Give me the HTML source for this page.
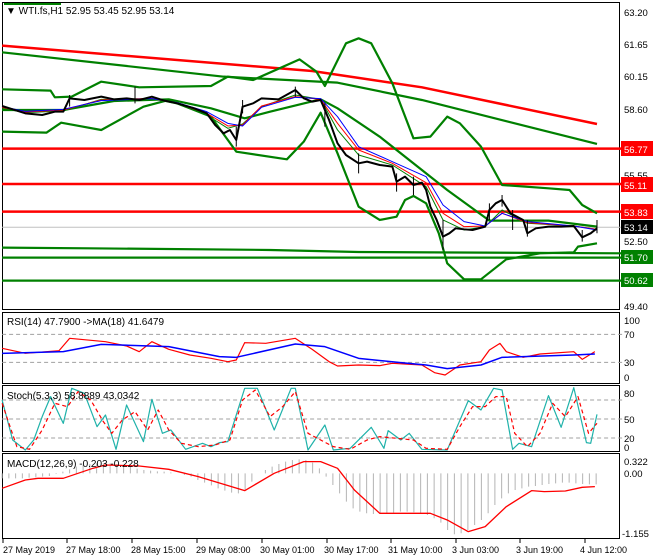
<!DOCTYPE html>
<html><head><meta charset="utf-8"><style>
html,body{margin:0;padding:0;background:#fff;}
svg{display:block;font-family:"Liberation Sans",sans-serif;}
</style></head><body>
<svg width="660" height="560" viewBox="0 0 660 560" xmlns="http://www.w3.org/2000/svg">
<rect width="660" height="560" fill="#fff"/>
<g fill="none" stroke="#000" stroke-width="1">
<rect x="2.5" y="2.5" width="617" height="307"/>
<rect x="2.5" y="312.5" width="617" height="71"/>
<rect x="2.5" y="385.5" width="617" height="66"/>
<rect x="2.5" y="453.5" width="617" height="85"/>
</g>
<line x1="4" y1="4" x2="61" y2="4" stroke="#008000" stroke-width="2"/>
<g transform="scale(0.4219,0.3333)" fill="none" stroke-linejoin="round">
<line x1="5" y1="682" x2="1475" y2="682" stroke="#c0c0c0" stroke-width="1" vector-effect="non-scaling-stroke"/>
<g stroke="#ff0000" stroke-width="2.5" vector-effect="non-scaling-stroke">
<line x1="5" y1="446" x2="1475" y2="446" vector-effect="non-scaling-stroke"/>
<line x1="5" y1="552" x2="1475" y2="552" vector-effect="non-scaling-stroke"/>
<line x1="5" y1="635" x2="1475" y2="635" vector-effect="non-scaling-stroke"/>
<polyline points="5,137 740,213 1000,262 1415,372" vector-effect="non-scaling-stroke"/>
</g>
<g stroke="#008000" stroke-width="2.2">
<line x1="5" y1="773" x2="1475" y2="773" vector-effect="non-scaling-stroke"/>
<line x1="5" y1="842" x2="1475" y2="842" vector-effect="non-scaling-stroke"/>
<polyline points="5,743 210,745 640,750 850,756 1475,760" vector-effect="non-scaling-stroke"/>
<polyline points="5,157 530,230 800,248 1000,300 1415,432" vector-effect="non-scaling-stroke"/>
<polyline points="5,268 120,272 130,292 170,290 240,245 330,262 500,258 540,230 600,240 710,178 750,215 770,258 820,130 850,115 880,130 930,250 980,415 1020,410 1060,350 1090,370 1140,440 1190,555 1300,565 1350,570 1380,615 1415,640" vector-effect="non-scaling-stroke"/>
<polyline points="5,330 150,330 270,303 400,298 500,325 580,355 640,335 760,298 800,325 900,410 1000,510 1060,570 1160,662 1300,662 1415,680" vector-effect="non-scaling-stroke"/>
<polyline points="5,395 110,398 145,368 240,390 340,320 400,300 500,350 560,455 680,478 720,425 760,338 800,460 850,620 900,660 940,650 960,600 980,588 1010,610 1040,700 1060,790 1100,838 1140,838 1200,778 1280,760 1360,757 1370,740 1415,730" vector-effect="non-scaling-stroke"/>
</g>
<polyline stroke="#008000" stroke-width="1" points="5,325 60,338 150,333 240,298 360,296 420,312 490,345 540,385 575,372 620,320 700,285 760,298 800,390 850,465 930,495 1010,560 1050,660 1100,690 1150,680 1190,630 1250,670 1360,678 1415,688" vector-effect="non-scaling-stroke"/>
<polyline stroke="#ff0000" stroke-width="1" points="5,322 60,336 150,330 240,300 360,295 420,310 490,340 540,378 575,375 620,318 700,290 760,298 800,370 850,450 930,490 1010,548 1050,640 1100,680 1150,678 1190,640 1250,668 1360,678 1415,688" vector-effect="non-scaling-stroke"/>
<polyline stroke="#0000ff" stroke-width="1" points="5,320 60,334 150,328 240,302 360,296 420,308 490,335 540,370 575,378 620,322 700,292 760,296 800,350 850,440 930,485 1010,530 1050,615 1100,665 1150,678 1190,640 1250,665 1360,678 1415,690" vector-effect="non-scaling-stroke"/>
<polyline stroke="#000" stroke-width="2" points="5,318 30,328 60,340 100,345 130,335 150,335 165,295 200,300 240,290 270,298 300,295 330,300 360,290 390,302 420,310 460,325 490,340 510,375 530,400 545,390 560,420 575,320 600,310 620,295 660,298 700,270 720,295 740,305 760,300 780,360 800,430 820,465 850,490 870,485 900,495 930,500 940,545 960,530 980,555 1000,548 1010,570 1020,620 1035,660 1050,710 1065,700 1080,685 1100,688 1120,690 1150,680 1160,630 1175,610 1190,600 1210,640 1225,650 1240,660 1250,700 1270,685 1300,680 1330,680 1360,678 1380,712 1400,700 1415,685" vector-effect="non-scaling-stroke"/>
<path stroke="#000" stroke-width="1" d="M165 285V320M320 260V310M560 380V440M575 300V340M700 260V290M770 310V380M850 460V520M940 520V575M980 530V585M1050 660V750M1160 610V660M1190 585V620M1215 630V690M1250 660V710M1380 690V725M1415 660V700" vector-effect="non-scaling-stroke"/>
</g>
<g transform="translate(0,300) scale(0.4219,0.3333)" fill="none" stroke-linejoin="round">
<g stroke="#a0a0a0" stroke-width="1" stroke-dasharray="4,3">
<line x1="5" y1="103" x2="1475" y2="103" vector-effect="non-scaling-stroke"/>
<line x1="5" y1="187" x2="1475" y2="187" vector-effect="non-scaling-stroke"/>
<line x1="5" y1="300" x2="1475" y2="300" vector-effect="non-scaling-stroke"/>
<line x1="5" y1="357" x2="1475" y2="357" vector-effect="non-scaling-stroke"/>
<line x1="5" y1="414" x2="1475" y2="414" vector-effect="non-scaling-stroke"/>
</g>
<polyline stroke="#ff0000" stroke-width="1.2" points="5,145 60,160 140,152 165,115 250,125 300,138 330,155 360,125 400,148 450,165 500,175 540,185 560,180 580,128 630,130 700,115 740,148 780,185 800,198 850,195 900,197 930,190 1000,195 1030,218 1055,225 1090,195 1140,185 1160,150 1185,130 1200,155 1240,172 1280,162 1360,155 1380,178 1410,155" vector-effect="non-scaling-stroke"/>
<polyline stroke="#0000ff" stroke-width="1.5" points="5,160 150,155 240,133 400,140 520,170 560,172 700,132 770,140 850,175 950,188 1010,195 1060,206 1140,195 1190,172 1360,165 1410,162" vector-effect="non-scaling-stroke"/>
<polyline stroke="#20b2aa" stroke-width="1.2" points="5,300 30,420 60,450 80,420 100,350 120,290 150,370 170,265 200,280 230,380 250,345 275,448 300,315 340,425 360,298 385,400 405,390 440,448 480,430 500,440 520,428 540,425 580,265 610,265 650,390 690,265 700,265 730,450 770,375 790,450 830,445 880,382 910,445 920,392 950,420 970,400 1000,448 1060,450 1110,302 1140,330 1170,265 1190,270 1215,448 1230,430 1260,440 1300,287 1330,382 1360,263 1390,428 1400,430 1415,343" vector-effect="non-scaling-stroke"/>
<polyline stroke="#ff0000" stroke-width="1.2" stroke-dasharray="4,3" points="5,310 40,440 70,448 100,390 130,310 160,320 185,275 215,300 245,365 265,400 290,360 320,335 350,390 375,330 400,390 430,430 470,440 510,435 545,420 575,300 605,270 640,350 670,320 700,275 730,400 760,420 790,440 830,448 870,420 900,410 940,415 980,420 1010,445 1060,448 1090,380 1120,320 1150,320 1175,290 1200,290 1220,400 1250,440 1280,400 1310,310 1340,350 1370,290 1395,400 1415,370" vector-effect="non-scaling-stroke"/>
<path stroke="#b4b4b4" stroke-width="1" vector-effect="non-scaling-stroke" d="M5 520V535M21 520V535M37 520V535M53 520V535M69 520V533M85 520V532M101 520V530M117 520V528M133 520V522M149 520V515M165 520V508M181 520V500M197 520V495M213 520V492M229 520V490M245 520V490M261 520V490M277 520V492M293 520V495M309 520V500M325 520V506M341 520V510M357 520V512M373 520V514M389 520V515M405 520V517M421 520V520M437 520V525M453 520V530M469 520V540M485 520V548M501 520V556M517 520V565M533 520V572M549 520V578M565 520V580M581 520V570M597 520V545M613 520V520M629 520V510M645 520V500M661 520V492M677 520V485M693 520V480M709 520V478M725 520V480M741 520V488M757 520V505M773 520V530M789 520V555M805 520V580M821 520V605M837 520V625M853 520V635M869 520V640M885 520V642M901 520V642M917 520V640M933 520V638M949 520V635M965 520V635M981 520V637M997 520V640M1013 520V645M1029 520V655M1045 520V668M1061 520V690M1077 520V703M1093 520V700M1109 520V690M1125 520V675M1141 520V660M1157 520V640M1173 520V615M1189 520V595M1205 520V580M1221 520V570M1237 520V565M1253 520V560M1269 520V558M1285 520V555M1301 520V552M1317 520V550M1333 520V548M1349 520V548M1365 520V550M1381 520V552M1397 520V553M1413 520V553"/>
<polyline stroke="#ff0000" stroke-width="1.3" points="5,565 60,540 90,535 150,535 220,505 250,495 330,498 400,508 470,530 580,572 650,520 720,485 760,485 800,505 840,570 900,640 1020,640 1060,660 1110,695 1150,680 1200,620 1260,572 1290,575 1340,573 1380,562 1410,560" vector-effect="non-scaling-stroke"/>
</g>
<g font-size="10" fill="#000">
<text x="6" y="14">▼ WTI.fs,H1  52.95 53.45 52.95 53.14</text>
<text x="7" y="325">RSI(14) 47.7900  -&gt;MA(18) 41.6479</text>
<text x="7" y="399">Stoch(5,3,3) 58.8889 43.0342</text>
<text x="7" y="467">MACD(12,26,9) -0.203 -0.228</text>
</g>
<g font-size="9.5" fill="#000">
<text x="624" y="16">63.20</text><text x="624" y="48">61.65</text><text x="624" y="80">60.15</text><text x="624" y="113">58.60</text>
<text x="624" y="179">55.55</text><text x="624" y="245">52.50</text><text x="624" y="310">49.40</text>
<text x="624" y="324">100</text><text x="624" y="338">70</text><text x="624" y="366">30</text><text x="624" y="381">0</text>
<text x="624" y="397">80</text><text x="624" y="423">50</text><text x="624" y="442">20</text><text x="624" y="451">0</text>
<text x="624" y="465">0.322</text><text x="624" y="477">0.00</text><text x="622" y="537">-1.155</text>
</g>
<rect x="621" y="141" width="32" height="15" fill="#ff0000"/><text x="624" y="153" font-size="9.5" fill="#fff">56.77</text>
<rect x="621" y="177" width="32" height="15" fill="#ff0000"/><text x="624" y="189" font-size="9.5" fill="#fff">55.11</text>
<rect x="621" y="204" width="32" height="15" fill="#ff0000"/><text x="624" y="216" font-size="9.5" fill="#fff">53.83</text>
<rect x="621" y="220" width="32" height="14" fill="#000"/><text x="624" y="231" font-size="9.5" fill="#fff">53.14</text>
<rect x="621" y="250" width="32" height="14" fill="#008000"/><text x="624" y="261" font-size="9.5" fill="#fff">51.70</text>
<rect x="621" y="273" width="32" height="14" fill="#008000"/><text x="624" y="284" font-size="9.5" fill="#fff">50.62</text>
<g stroke="#000" stroke-width="1">
<path d="M3 539V543M67 539V543M132 539V543M197 539V543M262 539V543M327 539V543M391 539V543M456 539V543M520 539V543M585 539V543"/>
</g>
<g font-size="9" fill="#000">
<text x="3" y="553">27 May 2019</text><text x="66" y="553">27 May 18:00</text><text x="131" y="553">28 May 15:00</text>
<text x="196" y="553">29 May 08:00</text><text x="260" y="553">30 May 01:00</text><text x="324" y="553">30 May 17:00</text>
<text x="388" y="553">31 May 10:00</text><text x="452" y="553">3 Jun 03:00</text><text x="516" y="553">3 Jun 19:00</text>
<text x="580" y="553">4 Jun 12:00</text>
</g>
</svg>
</body></html>
